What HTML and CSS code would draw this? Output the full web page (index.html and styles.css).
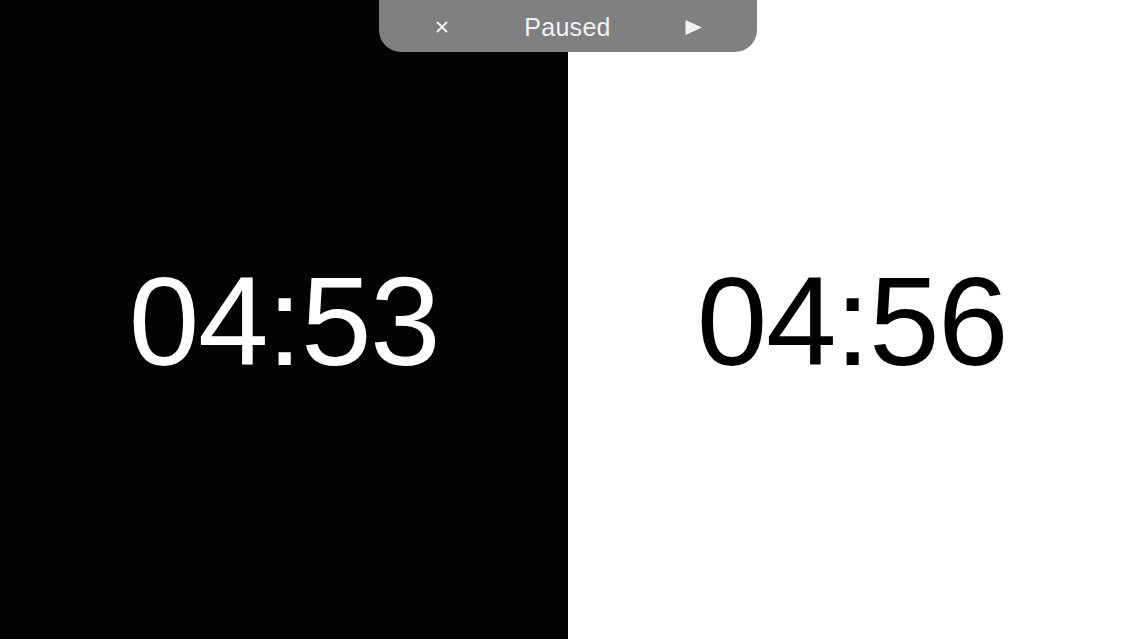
FILE: index.html
```html
<!DOCTYPE html>
<html>
<head>
<meta charset="utf-8">
<link rel="stylesheet" href="styles.css">
</head>
<body>
<div class="screen">
  <div class="panel panel-dark"><span class="time">04:53</span></div>
  <div class="panel panel-light"><span class="time">04:56</span></div>
  <div class="bar">
    <span class="bar-btn close">
      <svg width="12" height="12" viewBox="0 0 12 12"><path d="M1.5 1.5 L10.5 10.5 M10.5 1.5 L1.5 10.5" stroke="#f2f2f2" stroke-width="2" stroke-linecap="round"/></svg>
    </span>
    <span class="bar-title">Paused</span>
    <span class="bar-btn play">
      <svg width="17" height="15" viewBox="0 0 17 15"><path d="M0.5 0 L17 7.5 L0.5 15 Z" fill="#f2f2f2"/></svg>
    </span>
  </div>
</div>
</body>
</html>
```
FILE: styles.css
```css
html, body {
  margin: 0;
  padding: 0;
  width: 1136px;
  height: 639px;
  overflow: hidden;
}
.screen {
  position: relative;
  display: flex;
  width: 1136px;
  height: 639px;
  font-family: "Liberation Sans", Arial, sans-serif;
}
.panel {
  flex: 1;
  display: flex;
  align-items: center;
  justify-content: center;
}
.panel-dark {
  background: #030204;
  color: #ffffff;
}
.panel-light {
  background: #ffffff;
  color: #000000;
}
.time {
  font-size: 127px;
  line-height: 1;
  letter-spacing: -1.5px;
  margin-top: 4px;
}
.bar {
  position: absolute;
  top: 0;
  left: 379px;
  width: 378px;
  height: 52px;
  background: #807f81;
  border-radius: 0 0 22px 22px;
  display: flex;
  align-items: center;
  justify-content: space-between;
  box-sizing: border-box;
  padding: 2px 54px 0 53px;
  color: #f2f2f2;
}
.bar-title {
  font-size: 25px;
  letter-spacing: 0.3px;
}
.bar-btn {
  display: flex;
  align-items: center;
  justify-content: center;
  flex-shrink: 0;
  width: 20px;
  height: 20px;
}
.bar-btn svg {
  flex-shrink: 0;
  display: block;
}
```
